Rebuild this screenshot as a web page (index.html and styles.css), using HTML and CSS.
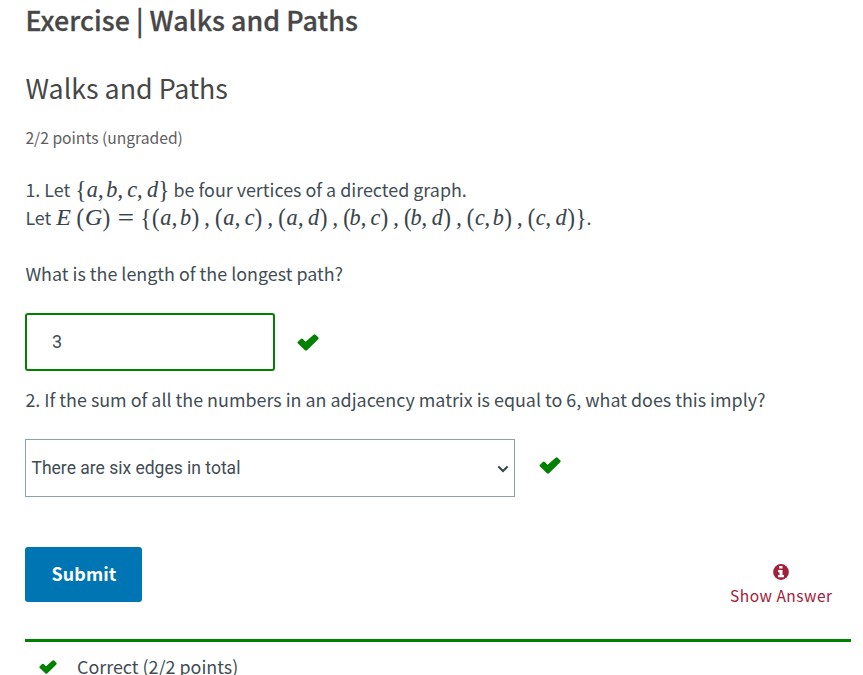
FILE: index.html
```html
<!DOCTYPE html>
<html lang="en">
<head>
<meta charset="utf-8">
<title>Exercise | Walks and Paths</title>
<link rel="stylesheet" href="styles.css">
</head>
<body>
<main class="problem">
  <h2 class="unit-title"><span>Exercise | Walks and Paths</span></h2>
  <h3 class="problem-title"><span>Walks and Paths</span></h3>
  <div class="progress"><span>2/2 points (ungraded)</span></div>
  <p class="line first"><span>1. Let</span><span class="math set"><i class="br">{</i><i class="a">a</i><i class="co">,</i><i class="b">b</i><i class="co">,</i><i class="c">c</i><i class="co">,</i><i class="d">d</i><i class="br">}</i></span><span class="after">be four vertices of a directed graph.</span></p>
  <p class="line second"><span>Let</span><span class="math edges"><i class="e">E</i><i class="pa">(</i><i class="g">G</i><i class="pa">)</i><i class="eq">=</i><i class="br">{</i><i class="pa">(</i><i class="a">a</i><i class="co">,</i><i class="b">b</i><i class="pa">)</i><i class="sep">,</i><i class="pa">(</i><i class="a">a</i><i class="co">,</i><i class="c">c</i><i class="pa">)</i><i class="sep">,</i><i class="pa">(</i><i class="a">a</i><i class="co">,</i><i class="d">d</i><i class="pa">)</i><i class="sep">,</i><i class="pa">(</i><i class="b">b</i><i class="co">,</i><i class="c">c</i><i class="pa">)</i><i class="sep">,</i><i class="pa">(</i><i class="b">b</i><i class="co">,</i><i class="d">d</i><i class="pa">)</i><i class="sep">,</i><i class="pa">(</i><i class="c">c</i><i class="co">,</i><i class="b">b</i><i class="pa">)</i><i class="sep">,</i><i class="pa">(</i><i class="c">c</i><i class="co">,</i><i class="d">d</i><i class="pa">)</i><i class="br">}</i></span><span>.</span></p>
  <p class="line ask"><span>What is the length of the longest path?</span></p>
  <div class="answer">
    <input class="field" type="text" value="3" aria-label="Answer">
    <svg class="check" viewBox="0 0 22 17"><path d="M1 7.7 3.8 4.9Q4.8 4 5.8 4.9L8.6 7.7 16.6.7Q17.6-.2 18.6.7L21.2 3.3Q22.1 4.3 21.2 5.3L10 16.3Q9 17.2 8 16.3L1 9.6Q0 8.7 1 7.7Z"/></svg>
  </div>
  <p class="line imply"><span>2. If the sum of all the numbers in an adjacency matrix is equal to 6, what does this imply?</span></p>
  <div class="answer choice">
    <div class="select" role="combobox" aria-label="Answer"><span>There are six edges in total</span>
      <svg class="chevron" viewBox="0 0 12 8"><path d="M1.4 1.5 6 6 10.6 1.5"/></svg>
    </div>
    <svg class="check" viewBox="0 0 22 17"><path d="M1 7.7 3.8 4.9Q4.8 4 5.8 4.9L8.6 7.7 16.6.7Q17.6-.2 18.6.7L21.2 3.3Q22.1 4.3 21.2 5.3L10 16.3Q9 17.2 8 16.3L1 9.6Q0 8.7 1 7.7Z"/></svg>
  </div>
  <div class="actions">
    <button class="submit">Submit</button>
    <button class="show">
      <svg class="info" viewBox="0 0 16 16"><circle cx="8" cy="8" r="7.9"/><path d="M6.2 2h3.3v2.5H6.2ZM5 6h4.5v5H11v2.3H5V11h1.5V8.2H5Z"/></svg>
      <span>Show Answer</span>
    </button>
  </div>
  <div class="notification">
    <svg class="check small" viewBox="0 0 22 17"><path d="M1 7.7 3.8 4.9Q4.8 4 5.8 4.9L8.6 7.7 16.6.7Q17.6-.2 18.6.7L21.2 3.3Q22.1 4.3 21.2 5.3L10 16.3Q9 17.2 8 16.3L1 9.6Q0 8.7 1 7.7Z"/></svg>
    <span>Correct (2/2 points)</span>
  </div>
</main>
</body>
</html>
```
FILE: styles.css
```css
* { box-sizing: border-box; }
html, body { height: 100%; }
body { margin: 0; overflow: hidden; background: #fff; color: #414141; font-family: "Noto Sans CJK SC", "Noto Sans", sans-serif; }
.problem { padding: 0 12px 0 25px; height: 675px; overflow: hidden; }
h2, h3, p { margin: 0; white-space: nowrap; }
.unit-title { height: 41px; line-height: 40px; font-size: 26.8px; font-weight: 500; color: #474747; -webkit-text-stroke: .3px #474747; letter-spacing: .05px; padding-left: .5px; }
.problem-title { height: 48px; line-height: 48px; margin-top: 23px; padding-left: .5px; font-size: 26.8px; font-weight: 400; color: #474747; }
.progress { height: 24px; line-height: 24px; margin-top: 14px; padding-left: .4px; font-size: 15.65px; color: #5e5e5e; }
.line { display: flex; height: 28px; line-height: 28px; padding-left: .4px; font-size: 17.9px; color: #414d54; }
.first { margin-top: 25px; }
.ask { margin-top: 28px; }
.math { display: flex; padding-top: 1px; font-family: "Liberation Serif", serif; font-size: 22.2px; color: #38434a; -webkit-text-stroke: .1px #38434a; }
.math i { display: block; flex: none; text-align: center; }
.set { margin-left: 5px; }
.edges { margin-left: 4px; }
.after { margin-left: 4px; }
.math .a { width: .529em; }
.math .b { width: .429em; text-indent: -.08em; }
.math .c { width: .433em; }
.math .d { width: .52em; }
.math .e { width: .764em; }
.math .g { width: .786em; }
.math .co { width: .445em; text-align: left; font-style: normal; }
.math .sep { width: .66em; font-style: normal; }
.math .br { width: .5em; font-style: normal; }
.math .pa { width: .389em; font-style: normal; }
.math .e + .pa { margin-left: .167em; }
.math .e, .math .g { transform: scaleX(1.08); }
.math .eq { width: 1.334em; font-style: normal; transform: scaleX(1.3); }
.math .pa, .math .br { transform: scaleY(1.1); }
.answer { display: flex; align-items: center; height: 58px; margin-top: 26px; }
.field { width: 250px; height: 58px; padding: 0 25px 2px; border: 2px solid #008100; border-radius: 3px; background: #fff; font: 18px Roboto, sans-serif; color: #414d54; outline: none; }
.check { width: 22px; height: 17px; margin-left: 22px; fill: #008100; }
.imply { margin-top: 14px; }
.choice { margin-top: 26px; }
.select { display: flex; align-items: center; justify-content: space-between; width: 490px; height: 58px; padding: 0 5px 0 5.5px; border: 1px solid #8fa1ab; font: 17.5px Roboto, sans-serif; color: #414d54; }
.chevron { width: 12px; height: 8px; margin-top: 1px; fill: none; stroke: #38434a; stroke-width: 2; }
.choice .check { margin-left: 24px; margin-bottom: 5px; }
.actions { display: flex; justify-content: space-between; margin-top: 50px; height: 92px; }
button { border: 0; padding: 0; background: none; font-family: inherit; white-space: nowrap; }
.submit { width: 117px; height: 55px; padding: 0 0 3px 1px; border-radius: 3px; background: #0075b4; color: #fff; font-size: 17.9px; font-weight: 700; letter-spacing: .1px; }
.show { display: flex; flex-direction: column; align-items: center; height: 64px; margin-right: 18.5px; padding-top: 17px; font-size: 15.5px; line-height: 24px; letter-spacing: .5px; color: #a3203a; }
.info { width: 16px; height: 16px; margin-bottom: 3px; fill: #a3203a; }
.info path { fill: #fff; }
.notification { display: flex; align-items: center; height: 57px; padding: 0 0 4px 14px; border-top: 3px solid #008100; font-size: 17.9px; color: #414d54; }
.notification span { margin-top: -2px; }
.small { width: 18px; height: 14px; margin: 0 20px 0 0; }
```
